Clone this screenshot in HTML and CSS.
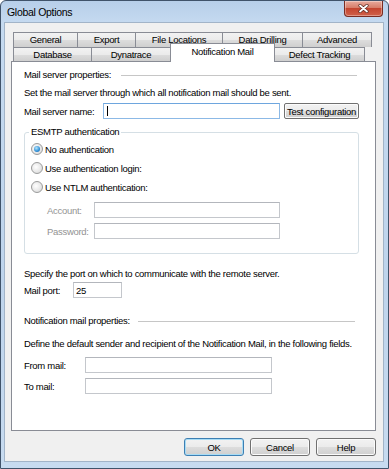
FILE: index.html
```html
<!DOCTYPE html>
<html lang="en">
<head>
  <meta charset="UTF-8">
  <title>Global Options</title>
  <link rel="stylesheet" href="styles.css">
</head>
<body>
  <div class="window">
    <div class="titlebar">
      <span class="title">Global Options</span>
      <button class="close" type="button" aria-label="Close">
        <svg width="11" height="9" viewBox="0 0 11 9">
          <path d="M2 1.5 L9 7.5 M9 1.5 L2 7.5" stroke="#5a2a22" stroke-width="3.2" stroke-linecap="round"/>
          <path d="M2 1.5 L9 7.5 M9 1.5 L2 7.5" stroke="#fff" stroke-width="1.8" stroke-linecap="round"/>
        </svg>
      </button>
    </div>

    <div class="client">
      <div class="tabs">
        <div class="tab-row back">
          <div class="tab t-general">General</div>
          <div class="tab t-export">Export</div>
          <div class="tab t-files">File Locations</div>
          <div class="tab t-drill">Data Drilling</div>
          <div class="tab t-advanced">Advanced</div>
        </div>
        <div class="tab-row front">
          <div class="tab t-database">Database</div>
          <div class="tab t-dynatrace">Dynatrace</div>
          <div class="tab t-mail selected">Notification Mail</div>
          <div class="tab t-defect">Defect Tracking</div>
        </div>
      </div>

      <div class="panel">
        <div class="section-head">
          <span>Mail server properties:</span>
          <span class="rule"></span>
        </div>
        <p class="desc">Set the mail server through which all notification mail should be sent.</p>
        <div class="field-row">
          <label class="lbl-server" for="server">Mail server name:</label>
          <div class="focus-wrap">
            <input class="textbox focused w-server" id="server" type="text">
            <span class="caret"></span>
          </div>
          <button class="btn btn-small" type="button">Test configuration</button>
        </div>

        <fieldset class="group">
          <legend>ESMTP authentication</legend>
          <div class="radio-row first">
            <span class="radio checked"></span>
            <span>No authentication</span>
          </div>
          <div class="radio-row">
            <span class="radio"></span>
            <span>Use authentication login:</span>
          </div>
          <div class="radio-row">
            <span class="radio"></span>
            <span>Use NTLM authentication:</span>
          </div>
          <div class="field-row sub first-sub">
            <label class="lbl-sub disabled" for="account">Account:</label>
            <input class="textbox w-sub" id="account" type="text" disabled>
          </div>
          <div class="field-row sub">
            <label class="lbl-sub disabled" for="password">Password:</label>
            <input class="textbox w-sub" id="password" type="password" disabled>
          </div>
        </fieldset>

        <p class="desc port-desc">Specify the port on which to communicate with the remote server.</p>
        <div class="field-row port-row">
          <label class="lbl-port" for="port">Mail port:</label>
          <input class="textbox w-port" id="port" type="text" value="25">
        </div>

        <div class="section-head second">
          <span>Notification mail properties:</span>
          <span class="rule rule-second"></span>
        </div>
        <p class="desc define-desc">Define the default sender and recipient of the Notification Mail, in the following fields.</p>
        <div class="field-row from-row">
          <label class="lbl-mail" for="from">From mail:</label>
          <input class="textbox w-mail" id="from" type="text">
        </div>
        <div class="field-row to-row">
          <label class="lbl-mail" for="to">To mail:</label>
          <input class="textbox w-mail" id="to" type="text">
        </div>
      </div>

      <div class="buttons">
        <button class="btn default" type="button">OK</button>
        <button class="btn" type="button">Cancel</button>
        <button class="btn" type="button">Help</button>
      </div>
    </div>
  </div>
</body>
</html>
```

FILE: styles.css
```css
* {
  box-sizing: border-box;
}

body {
  margin: 0;
  font-family: "Liberation Sans", Arial, sans-serif;
  font-size: 9.5px;
  letter-spacing: -0.3px;
  color: #000;
}

.window {
  width: 389px;
  height: 469px;
  border: 1px solid #40536a;
  border-radius: 6px 6px 0 0;
  background: linear-gradient(#b7cfe9, #c5daf0 22px, #bed4ec 60%, #c7dbf0);
  display: flex;
  flex-direction: column;
}

/* title bar */
.titlebar {
  height: 21px;
  display: flex;
  justify-content: space-between;
  align-items: flex-start;
  padding-left: 6px;
}

.title {
  font-size: 10.5px;
  letter-spacing: -0.3px;
  line-height: 22px;
}

.close {
  width: 39px;
  height: 16px;
  margin-right: 5px;
  padding: 0;
  border: 1px solid #7a2c22;
  border-top: none;
  border-radius: 0 0 4px 4px;
  background: linear-gradient(#e8ab9d, #d77d69 45%, #c4452f 50%, #d0614a);
  box-shadow: inset 0 0 0 1px rgba(255, 255, 255, 0.35);
  display: flex;
  align-items: center;
  justify-content: center;
}

/* dialog client area */
.client {
  flex: 1;
  margin: 0 4px 6px 3px;
  border: 1px solid #a2b4c8;
  background: #f0f0f0;
  padding: 9px 0 0 6px;
}

.tabs {
  margin-left: 2px;
}

.tab-row {
  display: flex;
}

.tab {
  border: 1px solid #898c95;
  border-bottom: none;
  margin-left: -1px;
  background: linear-gradient(#f2f2f2, #ebebeb 50%, #dddddd 50%, #cfcfcf);
  text-align: center;
  white-space: nowrap;
}

.tab:first-child {
  margin-left: 0;
}

.back .tab {
  height: 15px;
  line-height: 14px;
}

.front {
  height: 14px;
  align-items: flex-end;
}

.front .tab {
  height: 14px;
  line-height: 13px;
}

.front .tab.selected {
  height: 19px;
  line-height: 15px;
  margin-bottom: -1px;
  background: #fff;
  position: relative;
  z-index: 1;
}

.t-general { width: 65px; }
.t-export { width: 59px; }
.t-files { width: 88px; }
.t-drill { width: 81px; }
.t-advanced { width: 70px; }
.t-database { width: 79px; }
.t-dynatrace { width: 80px; }
.t-mail { width: 105px; }
.t-defect { width: 91px; }

/* tab page */
.panel {
  width: 365px;
  height: 370px;
  border: 1px solid #898c95;
  background: #fff;
  padding-left: 12px;
}

.section-head {
  display: flex;
  align-items: center;
  height: 12px;
  line-height: 12px;
  margin-top: 7px;
  white-space: nowrap;
}

.rule {
  flex: 1;
  border-top: 1px solid #c6c6c6;
  margin: 1px 18px 0 10px;
}

.rule-second {
  margin: 1px 20px 0 8px;
}

.desc {
  margin: 6px 0 0;
  line-height: 12px;
  white-space: nowrap;
}

.field-row {
  display: flex;
  align-items: center;
  height: 16px;
  margin-top: 4px;
}

.field-row label {
  flex: none;
  white-space: nowrap;
}

.lbl-server { width: 79px; }
.lbl-sub { width: 47px; }
.lbl-port { width: 49px; }
.lbl-mail { width: 61px; }

.disabled {
  color: #939393;
}

.textbox {
  height: 16px;
  margin: 0;
  padding: 0 2px;
  border: 1px solid #c4c7cc;
  border-top-color: #b3b6bc;
  background: #fff;
  font: inherit;
  letter-spacing: inherit;
  color: #000;
  outline: none;
}

.textbox:disabled {
  background: #fff;
}

.focused {
  border-color: #8cb9e6;
  border-top-color: #6ea6de;
}

.focus-wrap {
  position: relative;
  margin-right: 4px;
}

.caret {
  position: absolute;
  left: 4px;
  top: 3px;
  width: 1px;
  height: 10px;
  background: #000;
}

.w-server { width: 177px; display: block; }
.w-sub { width: 186px; }
.w-port { width: 49px; }
.w-mail { width: 187px; }

.btn {
  height: 18px;
  width: 60px;
  padding: 0;
  border: 1px solid #707070;
  border-radius: 3px;
  background: linear-gradient(#f2f2f2, #ebebeb 50%, #dddddd 50%, #cfcfcf);
  box-shadow: inset 0 0 0 1px #fbfbfb;
  font: inherit;
  letter-spacing: inherit;
  color: #000;
  white-space: nowrap;
}

.btn-small {
  width: 75px;
  height: 16px;
  border-radius: 2px;
}

.btn.default {
  border-color: #3d7fb3;
  box-shadow: inset 0 0 0 1px #a8dcf5;
}

/* ESMTP group box */
.group {
  width: 335px;
  margin: 7px 0 0;
  padding: 0 0 14px 6px;
  border: 1px solid #d5dfe5;
  border-radius: 3px;
}

.group legend {
  padding: 0 2px;
  margin-left: -2px;
  line-height: 12px;
}

.radio-row {
  display: flex;
  align-items: center;
  gap: 2px;
  height: 12px;
  margin-top: 7px;
  white-space: nowrap;
}

.radio-row.first {
  margin-top: 5px;
}

.radio {
  flex: none;
  width: 12px;
  height: 12px;
  border: 1px solid #9a9b9b;
  border-radius: 50%;
  background: radial-gradient(circle at 40% 40%, #ffffff, #e8e8e8 55%, #d2d2d2);
  display: flex;
  align-items: center;
  justify-content: center;
}

.radio.checked::after {
  content: "";
  width: 6px;
  height: 6px;
  border-radius: 50%;
  background: radial-gradient(circle at 40% 35%, #b5e6fc, #2f8fd6 60%, #1b5a98);
}

.sub {
  padding-left: 16px;
  margin-top: 5px;
}

.sub.first-sub {
  margin-top: 9px;
}

.port-desc { margin-top: 14px; }
.port-row { margin-top: 2px; }
.section-head.second { margin-top: 17px; }
.define-desc { margin-top: 11px; }
.from-row { margin-top: 7px; }
.to-row { margin-top: 5px; }

/* bottom buttons */
.buttons {
  display: flex;
  justify-content: flex-end;
  gap: 6px;
  margin-top: 7px;
  padding-right: 7px;
}
```
